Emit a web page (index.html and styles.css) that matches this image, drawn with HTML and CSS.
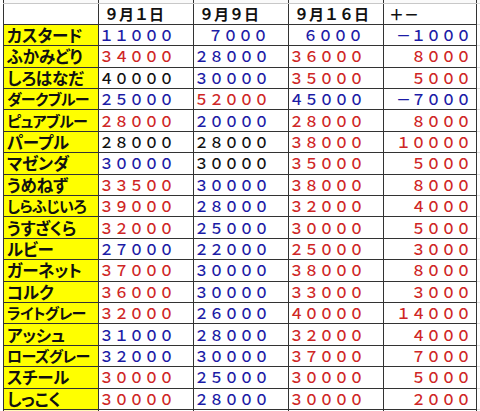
FILE: index.html
```html
<!DOCTYPE html>
<html lang="ja">
<head>
<meta charset="utf-8">
<title>色の集計</title>
<link rel="stylesheet" href="styles.css">
</head>
<body>
<table class="sheet">
  <colgroup>
    <col class="c-name"><col class="c-num"><col class="c-num"><col class="c-num"><col class="c-diff"><col class="c-rest">
  </colgroup>
  <tr class="peek"><td></td><td></td><td></td><td></td><td></td><td class="rest"></td></tr>
  <tr class="head"><td></td><td>９月１日</td><td>９月９日</td><td>９月１６日</td><td>＋－</td><td class="rest"></td></tr>
  <tr><td class="name">カスタード</td><td class="b">１１０００</td><td class="b">７０００</td><td class="b">６０００</td><td class="b d">－１０００</td><td class="rest"></td></tr>
  <tr><td class="name">ふかみどり</td><td class="r">３４０００</td><td class="b">２８０００</td><td class="r">３６０００</td><td class="r d">８０００</td><td class="rest"></td></tr>
  <tr><td class="name">しろはなだ</td><td class="k">４００００</td><td class="b">３００００</td><td class="r">３５０００</td><td class="r d">５０００</td><td class="rest"></td></tr>
  <tr><td class="name fit">ダークブルー</td><td class="b">２５０００</td><td class="r">５２０００</td><td class="b">４５０００</td><td class="b d">－７０００</td><td class="rest"></td></tr>
  <tr><td class="name fit">ピュアブルー</td><td class="r">２８０００</td><td class="b">２００００</td><td class="r">２８０００</td><td class="r d">８０００</td><td class="rest"></td></tr>
  <tr><td class="name">パープル</td><td class="k">２８０００</td><td class="k">２８０００</td><td class="r">３８０００</td><td class="r d">１００００</td><td class="rest"></td></tr>
  <tr><td class="name">マゼンダ</td><td class="b">３００００</td><td class="k">３００００</td><td class="r">３５０００</td><td class="r d">５０００</td><td class="rest"></td></tr>
  <tr><td class="name">うめねず</td><td class="r">３３５００</td><td class="b">３００００</td><td class="r">３８０００</td><td class="r d">８０００</td><td class="rest"></td></tr>
  <tr><td class="name fit">しらふじいろ</td><td class="r">３９０００</td><td class="b">２８０００</td><td class="r">３２０００</td><td class="r d">４０００</td><td class="rest"></td></tr>
  <tr><td class="name">うすざくら</td><td class="r">３２０００</td><td class="b">２５０００</td><td class="r">３００００</td><td class="r d">５０００</td><td class="rest"></td></tr>
  <tr><td class="name">ルビー</td><td class="b">２７０００</td><td class="b">２２０００</td><td class="r">２５０００</td><td class="r d">３０００</td><td class="rest"></td></tr>
  <tr><td class="name">ガーネット</td><td class="r">３７０００</td><td class="b">３００００</td><td class="r">３８０００</td><td class="r d">８０００</td><td class="rest"></td></tr>
  <tr><td class="name">コルク</td><td class="r">３６０００</td><td class="b">３００００</td><td class="r">３３０００</td><td class="r d">３０００</td><td class="rest"></td></tr>
  <tr><td class="name fit">ライトグレー</td><td class="r">３２０００</td><td class="b">２６０００</td><td class="r">４００００</td><td class="r d">１４０００</td><td class="rest"></td></tr>
  <tr><td class="name">アッシュ</td><td class="b">３１０００</td><td class="b">２８０００</td><td class="r">３２０００</td><td class="r d">４０００</td><td class="rest"></td></tr>
  <tr><td class="name fit">ローズグレー</td><td class="b">３２０００</td><td class="b">３００００</td><td class="r">３７０００</td><td class="r d">７０００</td><td class="rest"></td></tr>
  <tr><td class="name">スチール</td><td class="r">３００００</td><td class="b">２５０００</td><td class="r">３００００</td><td class="r d">５０００</td><td class="rest"></td></tr>
  <tr><td class="name">しっこく</td><td class="r">３００００</td><td class="b">２８０００</td><td class="r">３００００</td><td class="r d">２０００</td><td class="rest"></td></tr>
  <tr class="tail"><td class="name"></td><td></td><td></td><td></td><td></td><td class="rest"></td></tr>
</table>
</body>
</html>
```
FILE: styles.css
```css
html, body {
  margin: 0;
  padding: 0;
  background: #ffffff;
  overflow: hidden;
  width: 480px;
  height: 411px;
}

.sheet {
  border-collapse: collapse;
  table-layout: fixed;
  margin-left: 3px;
  width: 477px;
  font-family: "Noto Sans CJK JP", "Noto Sans", sans-serif;
  color: #111;
}

.c-name { width: 95px; }
.c-num { width: 95px; }
.c-diff { width: 93px; }
.c-rest { width: 4px; }

.sheet td {
  border: 1.6px solid #333;
  padding: 0;
  height: 21.4px;
  line-height: 20px;
  white-space: nowrap;
  overflow: hidden;
  box-sizing: border-box;
}

.sheet td.rest {
  border: none;
  border-bottom: 1px solid #dcdcdc;
  border-left: 1.6px solid #333;
}

.peek td {
  height: 3px;
  line-height: 0;
  border-top: none;
  border-bottom: 1px solid #c8c8c8;
  background: #fafafa;
}

.peek td.rest {
  border-bottom: 1px solid #dcdcdc;
}

.head td {
  font-size: 15px;
  font-weight: bold;
  padding-left: 5px;
  border-top: 1px solid #c8c8c8;
}

.head td.rest {
  padding: 0;
}

.name {
  background: #ffff00;
  font-size: 16.5px;
  font-weight: bold;
  padding-left: 3px !important;
  font-feature-settings: "palt";
  letter-spacing: -0.2px;
}

.name.fit {
  font-size: 15px;
  letter-spacing: -0.6px;
}

.b, .r, .k {
  font-size: 15px;
  font-weight: 500;
  text-align: right;
  padding-right: 20px !important;
}

.b { color: #1c1ca6; }
.r { color: #cf2626; }
.k { color: #111111; }

.sheet td.d {
  padding-right: 5px !important;
}

.tail td {
  border-bottom: none;
  border-top: 1.6px solid #333;
}

.tail td.name {
  background: #fffbb8;
}
```
